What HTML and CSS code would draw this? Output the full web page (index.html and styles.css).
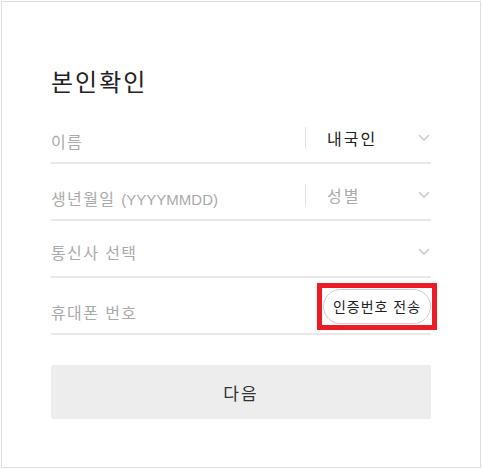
FILE: index.html
```html
<!DOCTYPE html>
<html lang="ko">
<head>
    <meta charset="UTF-8">
    <title>본인확인</title>
    <link rel="stylesheet" href="styles.css">
</head>
<body>
    <div class="card">
        <h1 class="title">본인확인</h1>

        <div class="row">
            <span class="field placeholder">이름</span>
            <span class="divider"></span>
            <div class="select">
                <span class="value">내국인</span>
                <svg class="chevron" width="12" height="8" viewBox="0 0 12 8"><polyline points="1,1 6,6 11,1" fill="none" stroke="#cccccc" stroke-width="1.6"/></svg>
            </div>
        </div>

        <div class="row">
            <span class="field placeholder">생년월일 <span class="latin">(YYYYMMDD)</span></span>
            <span class="divider"></span>
            <div class="select">
                <span class="value empty">성별</span>
                <svg class="chevron" width="12" height="8" viewBox="0 0 12 8"><polyline points="1,1 6,6 11,1" fill="none" stroke="#cccccc" stroke-width="1.6"/></svg>
            </div>
        </div>

        <div class="row row-carrier">
            <span class="field placeholder">통신사 선택</span>
            <svg class="chevron" width="12" height="8" viewBox="0 0 12 8"><polyline points="1,1 6,6 11,1" fill="none" stroke="#cccccc" stroke-width="1.6"/></svg>
        </div>

        <div class="row">
            <span class="field placeholder">휴대폰 번호</span>
            <span class="send-wrap">
                <button class="send">인증번호 전송</button>
            </span>
        </div>

        <button class="next">다음</button>
    </div>
</body>
</html>
```

FILE: styles.css
```css
body {
    margin: 0;
    padding: 1px;
    font-family: "Liberation Sans", "Noto Sans CJK KR", sans-serif;
}
.card {
    box-sizing: border-box;
    width: 480px;
    height: 467px;
    border: 1px solid #dddddd;
    padding: 64px 49px 0;
}
.title {
    margin: 0 0 7px;
    font-size: 24px;
    line-height: 34px;
    letter-spacing: 2px;
    font-weight: normal;
    color: #222222;
}
.row {
    display: flex;
    align-items: center;
    box-sizing: border-box;
    height: 57px;
    padding-top: 13px;
    border-bottom: 2px solid #e8e8e8;
}
.row-carrier {
    padding-top: 7px;
}
.field {
    flex: 1;
    font-size: 16px;
    letter-spacing: 1.4px;
}
.latin {
    font-size: 15px;
    letter-spacing: 0;
}
.placeholder {
    color: #aaaaaa;
}
.divider {
    width: 1px;
    height: 22px;
    margin-bottom: 6px;
    background: #e2e2e2;
}
.select {
    display: flex;
    align-items: center;
    width: 104px;
    padding-left: 21px;
    margin-bottom: 6px;
}
.value {
    flex: 1;
    font-size: 16px;
    letter-spacing: 2px;
    color: #222222;
}
.value.empty {
    color: #aaaaaa;
}
.chevron {
    margin-right: 1px;
}
.send-wrap {
    display: flex;
    margin-bottom: 12px;
    outline: 5px solid #ed1c24;
    outline-offset: 1px;
}
.send {
    height: 35px;
    width: 108px;
    padding: 0;
    font-family: inherit;
    font-size: 14px;
    letter-spacing: 1px;
    color: #222222;
    background: #ffffff;
    border: 1px solid #cccccc;
    border-radius: 18px;
}
.next {
    display: block;
    width: 100%;
    height: 54px;
    margin-top: 30px;
    font-family: inherit;
    font-size: 17px;
    letter-spacing: 2px;
    color: #333333;
    background: #ededed;
    border: none;
    border-radius: 2px;
}
```
